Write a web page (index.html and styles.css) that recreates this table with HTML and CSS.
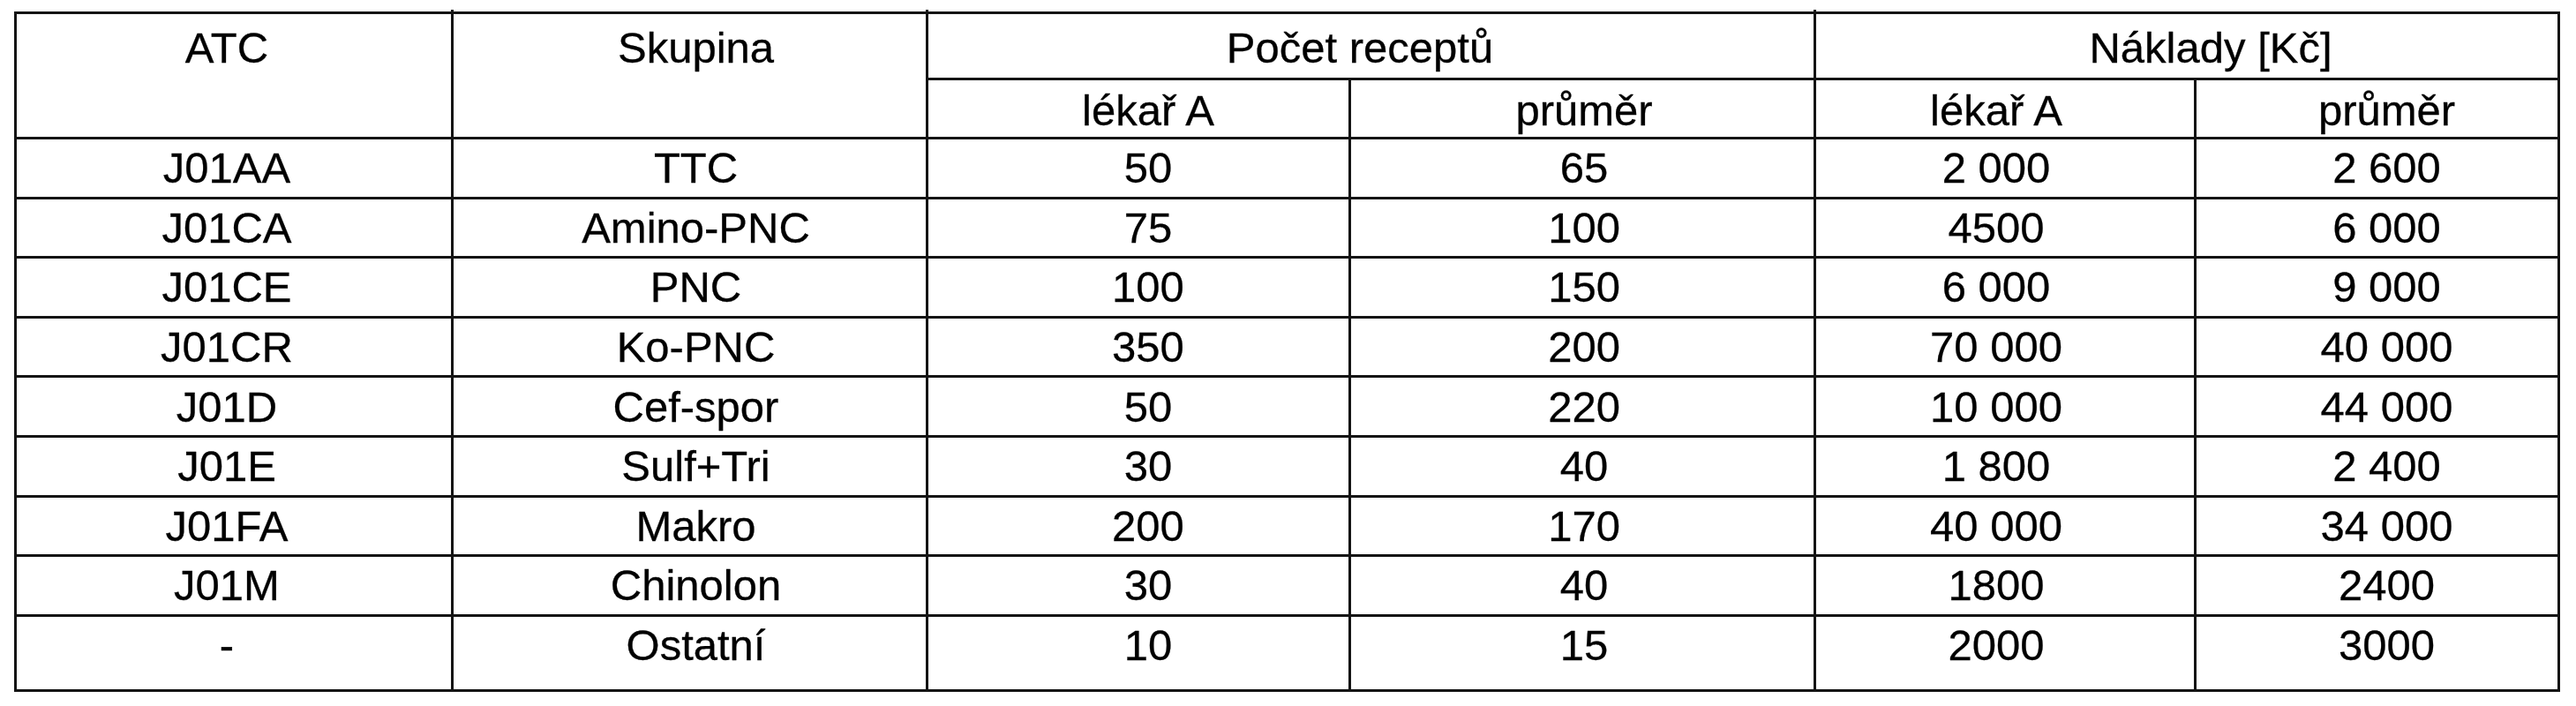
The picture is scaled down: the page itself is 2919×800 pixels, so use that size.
FILE: index.html
```html
<!DOCTYPE html>
<html lang="cs">
<head>
<meta charset="utf-8">
<title>ATC</title>
<link rel="stylesheet" href="styles.css">
</head>
<body>
<div class="page">
<table class="atc">
<colgroup>
<col class="w1"><col class="w2"><col class="w3"><col class="w4"><col class="w5"><col class="w6">
</colgroup>
<thead>
<tr class="h1">
<th rowspan="2" class="c1 top">ATC</th>
<th rowspan="2" class="c2 top tick">Skupina</th>
<th colspan="2" class="g1 tick">Počet receptů</th>
<th colspan="2" class="g2 tick">Náklady [Kč]</th>
</tr>
<tr class="h2">
<th class="c3">lékař A</th><th class="c4">průměr</th><th class="c5">lékař A</th><th class="c6">průměr</th>
</tr>
</thead>
<tbody>
<tr><td class="c1">J01AA</td><td class="c2">TTC</td><td class="c3">50</td><td class="c4">65</td><td class="c5">2 000</td><td class="c6">2 600</td></tr>
<tr><td class="c1">J01CA</td><td class="c2">Amino-PNC</td><td class="c3">75</td><td class="c4">100</td><td class="c5">4500</td><td class="c6">6 000</td></tr>
<tr><td class="c1">J01CE</td><td class="c2">PNC</td><td class="c3">100</td><td class="c4">150</td><td class="c5">6 000</td><td class="c6">9 000</td></tr>
<tr><td class="c1">J01CR</td><td class="c2">Ko-PNC</td><td class="c3">350</td><td class="c4">200</td><td class="c5">70 000</td><td class="c6">40 000</td></tr>
<tr><td class="c1">J01D</td><td class="c2">Cef-spor</td><td class="c3">50</td><td class="c4">220</td><td class="c5">10 000</td><td class="c6">44 000</td></tr>
<tr><td class="c1">J01E</td><td class="c2">Sulf+Tri</td><td class="c3">30</td><td class="c4">40</td><td class="c5">1 800</td><td class="c6">2 400</td></tr>
<tr><td class="c1">J01FA</td><td class="c2">Makro</td><td class="c3">200</td><td class="c4">170</td><td class="c5">40 000</td><td class="c6">34 000</td></tr>
<tr><td class="c1">J01M</td><td class="c2">Chinolon</td><td class="c3">30</td><td class="c4">40</td><td class="c5">1800</td><td class="c6">2400</td></tr>
<tr class="last"><td class="c1">-</td><td class="c2">Ostatní</td><td class="c3">10</td><td class="c4">15</td><td class="c5">2000</td><td class="c6">3000</td></tr>
</tbody>
</table>
</div>
</body>
</html>
```

FILE: styles.css
```css
html, body {
  margin: 0;
  padding: 0;
  background: #ffffff;
}

.page {
  padding: 13px 0 0 16px;
}

.atc {
  border-collapse: collapse;
  table-layout: fixed;
  width: 2883px;
  font-family: "Liberation Sans", Arial, sans-serif;
  font-size: 49px;
  line-height: 56px;
  color: #000000;
  -webkit-text-stroke: 0.3px #000000;
}

.w1 { width: 495px; }
.w2 { width: 538px; }
.w3 { width: 479px; }
.w4 { width: 527px; }
.w5 { width: 431px; }
.w6 { width: 412px; }

.atc th,
.atc td {
  border: 3px solid #141414;
  font-weight: normal;
  text-align: center;
  vertical-align: middle;
  padding-top: 0;
  padding-bottom: 0;
  white-space: nowrap;
}

.atc th.top {
  vertical-align: top;
  padding-top: 10px;
}

.atc th.tick {
  position: relative;
}

.atc th.tick::before {
  content: "";
  position: absolute;
  left: -3px;
  top: -5px;
  width: 3px;
  height: 3px;
  background: #141414;
}

.h1 { height: 75px; }
.h1 .g1, .h1 .g2 { padding-top: 4px; }
.h2 { height: 67px; }
.h2 th { padding-top: 3px; }

.atc tbody tr { height: 67.6px; }
.atc tbody tr.last { height: 85px; }
.atc tbody tr.last td { padding-bottom: 17px; }

.c1 { padding-left: 12px; padding-right: 28px; }
.c2 { padding-left: 27px; padding-right: 13px; }
.c3 { padding-left: 31px; padding-right: 9px; }
.c4 { padding-left: 22px; padding-right: 18px; }
.c5 { padding-left: 10px; padding-right: 30px; }
.c6 { padding-left: 31px; padding-right: 9px; }
.g1 { padding-left: 8px; padding-right: 33px; }
.g2 { padding-left: 57px; padding-right: 3px; }
```
